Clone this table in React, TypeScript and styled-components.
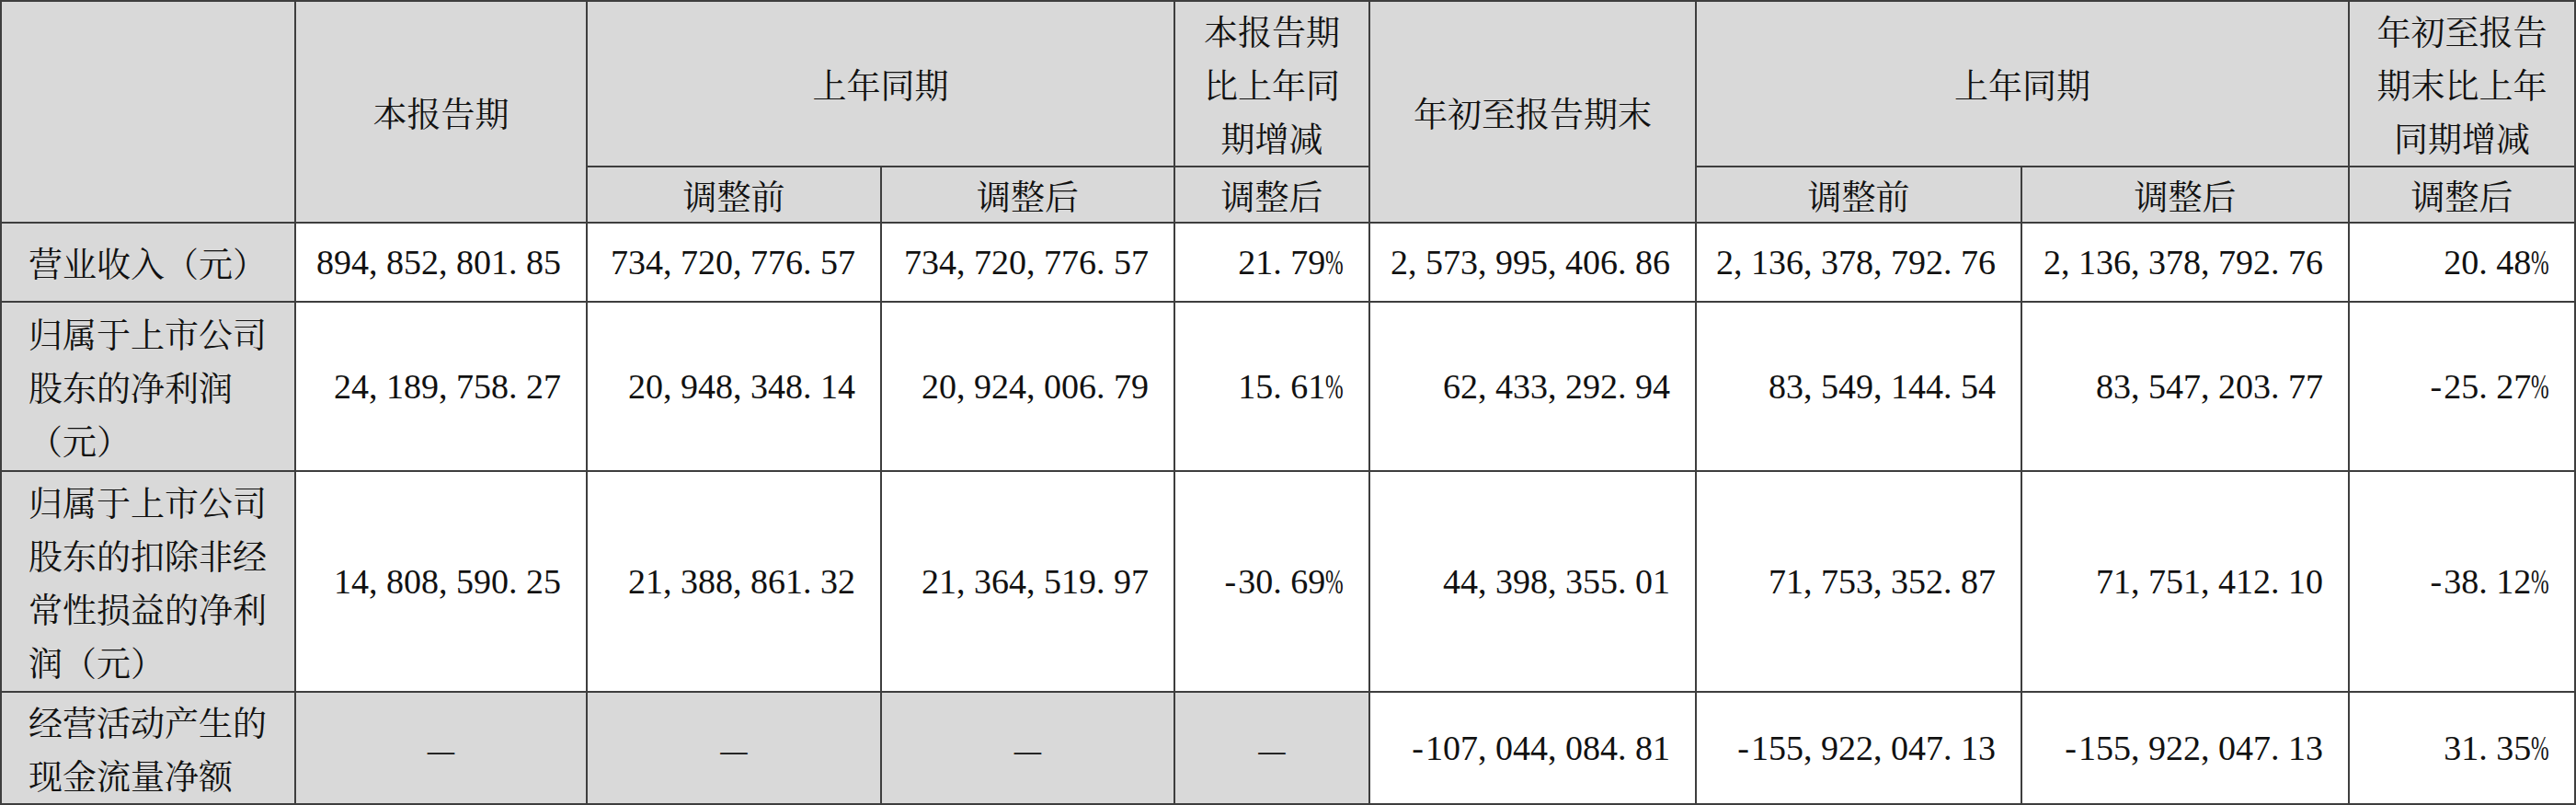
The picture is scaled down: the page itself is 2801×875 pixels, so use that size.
import { Fragment } from "react"
import styled, { createGlobalStyle } from "styled-components"

const CJK = `"Noto Serif CJK SC", "Noto Sans CJK SC", serif`
const NUM = `"Liberation Serif", "Noto Serif CJK SC", "Noto Sans CJK SC", serif`

type Row = {
  label: string[]
  values: string[]
  mutedUntil?: number
}

const ROWS: Row[] = [
  {
    label: ["营业收入（元）"],
    values: [
      "894,852,801.85",
      "734,720,776.57",
      "734,720,776.57",
      "21.79%",
      "2,573,995,406.86",
      "2,136,378,792.76",
      "2,136,378,792.76",
      "20.48%",
    ],
  },
  {
    label: ["归属于上市公司", "股东的净利润", "（元）"],
    values: [
      "24,189,758.27",
      "20,948,348.14",
      "20,924,006.79",
      "15.61%",
      "62,433,292.94",
      "83,549,144.54",
      "83,547,203.77",
      "-25.27%",
    ],
  },
  {
    label: ["归属于上市公司", "股东的扣除非经", "常性损益的净利", "润（元）"],
    values: [
      "14,808,590.25",
      "21,388,861.32",
      "21,364,519.97",
      "-30.69%",
      "44,398,355.01",
      "71,753,352.87",
      "71,751,412.10",
      "-38.12%",
    ],
  },
  {
    label: ["经营活动产生的", "现金流量净额"],
    values: [
      "—",
      "—",
      "—",
      "—",
      "-107,044,084.81",
      "-155,922,047.13",
      "-155,922,047.13",
      "31.35%",
    ],
    mutedUntil: 4,
  },
]

export default function App() {
  return (
    <>
      <GlobalStyle />
      <Grid>
        <Cell $tone="head" $rowSpan={2} />
        <Cell $tone="head" $rowSpan={2} $align="center">
          本报告期
        </Cell>
        <Cell $tone="head" $colSpan={2} $align="center">
          上年同期
        </Cell>
        <Cell $tone="head" $align="center">
          <Lines lines={["本报告期", "比上年同", "期增减"]} />
        </Cell>
        <Cell $tone="head" $rowSpan={2} $align="center">
          年初至报告期末
        </Cell>
        <Cell $tone="head" $colSpan={2} $align="center">
          上年同期
        </Cell>
        <Cell $tone="head" $align="center">
          <Lines lines={["年初至报告", "期末比上年", "同期增减"]} />
        </Cell>

        {["调整前", "调整后", "调整后", "调整前", "调整后", "调整后"].map(
          (t, i) => (
            <Cell key={i} $tone="head" $align="center">
              {t}
            </Cell>
          )
        )}

        {ROWS.map((row, r) => (
          <Fragment key={r}>
            <Cell $tone="head" $align="left">
              <Lines lines={row.label} />
            </Cell>
            {row.values.map((v, c) =>
              row.mutedUntil !== undefined && c < row.mutedUntil ? (
                <Cell key={c} $tone="head" $align="center">
                  <Dash>{v}</Dash>
                </Cell>
              ) : (
                <Cell key={c} $tone="body" $align="right">
                  <NumberText value={v} />
                </Cell>
              )
            )}
          </Fragment>
        ))}
      </Grid>
    </>
  )
}

const Lines = ({ lines }: { lines: string[] }) => (
  <LineStack>
    {lines.map((l, i) => (
      <span key={i}>{l}</span>
    ))}
  </LineStack>
)

// mimic the half-width punctuation of the original Song typeface
const NumberText = ({ value }: { value: string }) => (
  <Num>
    {value.split("").map((ch, i) => {
      if (ch === "," || ch === ".") return <Punct key={i}>{ch}</Punct>
      if (ch === "-") return <Minus key={i}>-</Minus>
      if (ch === "%") return <Pct key={i}>%</Pct>
      return ch
    })}
  </Num>
)

const GlobalStyle = createGlobalStyle`
  html, body {
    margin: 0;
    padding: 0;
    background: #fff;
  }
`

const Grid = styled.div`
  display: grid;
  box-sizing: border-box;
  width: 2801px;
  height: 875px;
  grid-template-columns: 318px 315px 318px 317px 210px 353px 352px 354px 1fr;
  grid-template-rows: 178px 59px 84px 182px 238px 1fr;
  grid-auto-flow: row;
  gap: 2px;
  padding: 2px;
  background: #3e3e3e;
`

const Cell = styled.div<{
  $tone: "head" | "body"
  $align?: "left" | "center" | "right"
  $rowSpan?: number
  $colSpan?: number
}>`
  display: flex;
  align-items: center;
  justify-content: ${(p) =>
    p.$align === "left"
      ? "flex-start"
      : p.$align === "right"
      ? "flex-end"
      : "center"};
  text-align: ${(p) => p.$align ?? "center"};
  padding: ${(p) => (p.$align === "left" ? "0 0 0 29px" : "0 27px")};
  background: ${(p) => (p.$tone === "head" ? "#d9d9d9" : "#ffffff")};
  grid-row: ${(p) => (p.$rowSpan ? `span ${p.$rowSpan}` : "auto")};
  grid-column: ${(p) => (p.$colSpan ? `span ${p.$colSpan}` : "auto")};
  font-family: ${CJK};
  font-size: 37px;
  line-height: 58px;
  color: #111;
  white-space: nowrap;
  overflow: hidden;
`

const LineStack = styled.div`
  display: flex;
  flex-direction: column;
`

const Num = styled.span`
  font-family: ${NUM};
  font-size: 38px;
  color: #111;
`

const Punct = styled.span`
  display: inline-block;
  width: 0.5em;
  text-align: left;
`

const Minus = styled.span`
  display: inline-block;
  width: 0.45em;
  text-align: center;
`

const Pct = styled.span`
  display: inline-block;
  width: 0.52em;
  transform: scaleX(0.62);
  transform-origin: left center;
`

const Dash = styled.span`
  font-family: ${CJK};
  font-size: 37px;
`
